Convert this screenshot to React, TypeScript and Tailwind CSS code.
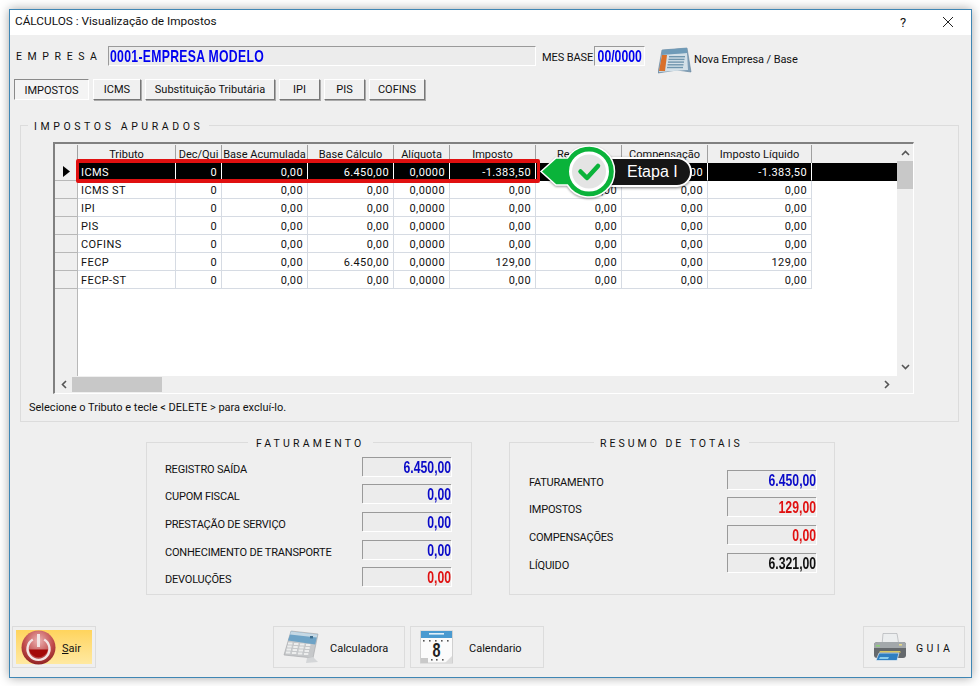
import React from 'react';

const COLS = ['w-[98px]', 'w-[46px]', 'w-[86px]', 'w-[86px]', 'w-[56px]', 'w-[86px]', 'w-[86px]', 'w-[86px]', 'w-[104px]'];
const HEADERS = ['Tributo', 'Dec/Qui', 'Base Acumulada', 'Base Cálculo', 'Alíquota', 'Imposto', 'Redução', 'Compensação', 'Imposto Líquido'];
const ROWS = [
  ['ICMS', '0', '0,00', '6.450,00', '0,0000', '-1.383,50', '0,00', '0,00', '-1.383,50'],
  ['ICMS ST', '0', '0,00', '0,00', '0,0000', '0,00', '0,00', '0,00', '0,00'],
  ['IPI', '0', '0,00', '0,00', '0,0000', '0,00', '0,00', '0,00', '0,00'],
  ['PIS', '0', '0,00', '0,00', '0,0000', '0,00', '0,00', '0,00', '0,00'],
  ['COFINS', '0', '0,00', '0,00', '0,0000', '0,00', '0,00', '0,00', '0,00'],
  ['FECP', '0', '0,00', '6.450,00', '0,0000', '129,00', '0,00', '0,00', '129,00'],
  ['FECP-ST', '0', '0,00', '0,00', '0,0000', '0,00', '0,00', '0,00', '0,00'],
];

const Tab: React.FC<{ label: string; width: string; active?: boolean }> = ({ label, width, active }) => (
  <div
    className={`${width} h-[21px] flex items-center justify-center border ${
      active
        ? 'border-t-[#8a8a8a] border-l-[#8a8a8a] border-r-white border-b-white bg-[#f4f4f4] pt-[2px]'
        : 'border-t-white border-l-white border-r-[#777] border-b-[#777] bg-[#f0f0f0] shadow-[1px_1px_0_#aaa] pb-[1px]'
    }`}
  >
    {label}
  </div>
);

// values in the boxes are a narrow bold face, Liberation Sans squeezed to fit
const Narrow: React.FC<{ children: React.ReactNode; className: string }> = ({ children, className }) => (
  <span className={`inline-block whitespace-nowrap font-[Liberation_Sans,Arial,sans-serif] font-bold text-[17px] scale-x-[0.72] ${className}`}>
    {children}
  </span>
);

const ValueBox: React.FC<{ value: string; color: string }> = ({ value, color }) => (
  <div className={`ml-auto w-[89px] h-[19px] bg-[#ececec] border-t border-l border-[#9a9a9a] shadow-[1px_1px_0_#fff] flex items-center justify-end ${color}`}>
    <Narrow className="origin-right">{value}</Narrow>
  </div>
);

const TotalRow: React.FC<{ label: string; value: string; color: string; h: string }> = ({ label, value, color, h }) => (
  <div className={`${h} flex items-start`}>
    <span className="mt-[7px] tracking-[-0.2px]">{label}</span>
    <ValueBox value={value} color={color} />
  </div>
);

const PowerIcon = () => (
  <svg width="35" height="35" viewBox="0 0 35 35">
    <defs>
      <radialGradient id="pw" cx="0.5" cy="0.3" r="0.8">
        <stop offset="0" stopColor="#ecb4b4" />
        <stop offset="0.55" stopColor="#c04a4a" />
        <stop offset="1" stopColor="#7d1212" />
      </radialGradient>
    </defs>
    <circle cx="17.5" cy="17.5" r="17" fill="url(#pw)" />
    <path d="M8 19.5a9.7 9.7 0 0 0 19 0z" fill="#a30808" />
    <path d="M11.8 9.5a11 11 0 1 0 11.4 0" fill="none" stroke="#f2e4e4" strokeWidth="2.4" />
    <rect x="16" y="4" width="3" height="13" fill="#f3e4e4" />
  </svg>
);

const CalcIcon = () => (
  <svg width="36" height="34" viewBox="0 0 36 34">
    <path d="M8 1l27 3-5 24-29-3z" fill="#c6c8ca" stroke="#a3a5a8" strokeWidth="0.6" />
    <path d="M8 1.5l26.5 3-2.3 10L5 10.5z" fill="#6ea3c6" />
    <path d="M8 1.5l26.5 3-.7 3L7 4.5z" fill="#c5d8e4" />
    <rect x="27" y="6" width="3" height="2.4" fill="#3f6f90" />
    <g fill="#eceded">
      {[0, 1, 2, 3].map(r =>
        [0, 1, 2, 3].map(c => <rect key={`${r}-${c}`} x={5 + c * 6 - r * 0.7} y={12.5 + r * 3 + c * 0.5} width="4.4" height="2" />)
      )}
    </g>
    <path d="M24 28l6-1 5 5-12 1z" fill="#d4d6d8" />
  </svg>
);

const CalendarIcon = () => (
  <svg width="33" height="34" viewBox="0 0 33 34">
    <rect x="0.5" y="1" width="32" height="32" fill="#fbfbfb" stroke="#d0d0d0" />
    <rect x="1" y="1" width="31" height="7" fill="#4a9ad0" />
    <rect x="9" y="3" width="15" height="1.6" fill="#e2f0f9" />
    <g fill="#555">
      <rect x="3" y="10" width="1.6" height="1.6" /><rect x="9" y="10" width="1.6" height="1.6" /><rect x="15" y="10" width="1.6" height="1.6" /><rect x="21" y="10" width="1.6" height="1.6" /><rect x="27" y="10" width="1.6" height="1.6" />
      <rect x="11" y="29" width="1.6" height="1.6" /><rect x="16" y="29" width="1.6" height="1.6" /><rect x="22" y="29" width="1.6" height="1.6" />
    </g>
    <text transform="translate(16.5 27) scale(0.72 1)" textAnchor="middle" fontFamily="'Liberation Sans',sans-serif" fontWeight="700" fontSize="20" fill="#222">8</text>
    <path d="M1 33v-5h7v5z" fill="#c9c9c9" />
    <path d="M32 26v7h-7z" fill="#dcdcdc" />
  </svg>
);

const PrinterIcon = () => (
  <svg width="34" height="28" viewBox="0 0 34 28">
    <path d="M10 0.5h14l2 12H9z" fill="#eceeef" stroke="#a6aaad" strokeWidth="0.6" />
    <path d="M1 12q0-3 4-3h25q3 0 3 3v10q0 3-3 3H4q-3 0-3-3z" fill="#65696d" />
    <path d="M1 12q0-3 4-3h25q3 0 3 3v3H1z" fill="#a3a8ab" />
    <rect x="3" y="12" width="4" height="1.6" fill="#8fd07a" />
    <rect x="26" y="11" width="3" height="1.6" fill="#e5d98a" />
    <path d="M7 18h20l1 1.5H6z" fill="#d8c860" />
    <path d="M6 20h20l-2 7.5H3z" fill="#2f7fc1" stroke="#e8eef2" strokeWidth="0.7" />
    <path d="M7 24h9l-1 2H6z" fill="#8ccdea" />
  </svg>
);

const DeskCalendarIcon = () => (
  <svg width="34" height="27" viewBox="0 0 34 27">
    <path d="M4 3L29 1l4 24-14-2-19 3z" fill="#7f9fb8" stroke="#5f7f98" strokeWidth="0.6" />
    <path d="M4 7l25-1 1 17L1 25z" fill="#d3e0e8" />
    <path d="M4 3l25-2 0 5L4 8z" fill="#6f9bb8" />
    <path d="M4 8h5L7 24H1z" fill="#d9702a" />
    <g fill="#6f95ad">
      {[0, 1, 2, 3, 4].map(r => <rect key={r} x={11 - r * 0.5} y={9 + r * 2.7} width="16" height="1.4" />)}
    </g>
  </svg>
);

export default function App() {
  return (
    <div className="w-[980px] h-[686px] bg-white pl-[9px] pt-[9px] font-[Roboto,Arial,sans-serif] text-[11px] leading-none text-[#111] overflow-hidden">
      <div className="w-[963px] h-[669px] border border-[#3f86b4] bg-[#efefef] shadow-[0_0_10px_rgba(0,0,0,0.35)] flex flex-col">
        {/* Title bar */}
        <div className="h-[25px] shrink-0 bg-white flex items-center pl-[5px] pb-[1px] text-[11.8px]">
          <span className="flex-1">CÁLCULOS : Visualização de Impostos</span>
          <span className="w-[10px] text-[13px] mr-[32px]">?</span>
          <svg width="12" height="12" viewBox="0 0 12 12" className="mr-[17px]">
            <path d="M1 1l10 10M11 1L1 11" stroke="#222" strokeWidth="1" />
          </svg>
        </div>

        {/* Empresa row */}
        <div className="mt-[11px] h-[29px] flex items-start pl-[6px]">
          <span className="w-[92px] mt-[6px] tracking-[5.6px] text-[10.5px]">EMPRESA</span>
          <div className="w-[428px] h-[20px] border border-t-[#9a9a9a] border-l-[#9a9a9a] border-r-white border-b-white flex items-center pl-[1px] text-[#0000f0] bg-[#ececec]">
            <Narrow className="origin-left tracking-[0.4px]">0001-EMPRESA MODELO</Narrow>
          </div>
          <span className="ml-[6px] mt-[6px] w-[52px] tracking-[-0.1px] whitespace-nowrap">MES BASE</span>
          <div className="w-[51px] h-[20px] border border-t-[#9a9a9a] border-l-[#9a9a9a] border-r-white border-b-white flex items-center justify-center text-[#0000f0] bg-[#f2f2f2]">
            <Narrow className="origin-center">00/0000</Narrow>
          </div>
          <div className="ml-[13px] mt-[1px]"><DeskCalendarIcon /></div>
          <span className="ml-[2px] mt-[8px] tracking-[-0.1px]">Nova Empresa / Base</span>
        </div>

        {/* Tabs */}
        <div className="mt-[4px] h-[21px] flex gap-[4px] pl-[4px]">
          <Tab label="IMPOSTOS" width="w-[75px]" active />
          <Tab label="ICMS" width="w-[48px]" />
          <Tab label="Substituição Tributária" width="w-[130px]" />
          <Tab label="IPI" width="w-[41px]" />
          <Tab label="PIS" width="w-[41px]" />
          <Tab label="COFINS" width="w-[56px]" />
        </div>

        {/* Impostos apurados */}
        <div className="relative mt-[25px] ml-[10px] w-[939px] h-[297px] shrink-0 border border-[#dcdcdc] pl-[32px] pt-[16px]">
          <span className="absolute left-[7px] top-[-4px] bg-[#efefef] px-[6px] tracking-[3.6px] text-[10.5px] whitespace-nowrap">IMPOSTOS APURADOS</span>

          <div className="relative w-[861px] h-[252px] border-t-2 border-l-2 border-t-[#808080] border-l-[#808080] border-r border-b border-r-white border-b-white bg-[#efefef] flex flex-col">
            <div className="flex-1 flex min-h-0">
              <div className="w-[843px] flex flex-col bg-white tracking-[0.4px]">
                {/* Header */}
                <div className="h-[19px] pt-[1px] flex bg-[#efefef] shrink-0 tracking-normal">
                  <div className="w-[23px] border-r border-[#a0a0a0]" />
                  {HEADERS.map((h, i) => (
                    <div key={h} className={`${COLS[i]} border-r border-[#a0a0a0] flex items-center justify-center whitespace-nowrap`}>
                      {h}
                    </div>
                  ))}
                </div>
                {/* Rows */}
                {ROWS.map((row, r) => (
                  <div key={row[0]} className={`h-[18px] flex shrink-0 ${r === 0 ? 'bg-black text-white' : 'text-[#111]'}`}>
                    <div className="w-[23px] bg-[#efefef] border-r border-b border-[#b8b8b8] flex items-center justify-center">
                      {r === 0 && (
                        <svg width="7" height="11" viewBox="0 0 7 11"><path d="M0 0l7 5.5L0 11z" fill="#000" /></svg>
                      )}
                    </div>
                    {row.map((cell, i) => (
                      <div
                        key={i}
                        className={`${COLS[i]} pt-[1px] border-r border-b border-[#d6dbe3] flex items-center whitespace-nowrap ${i === 0 ? 'pl-[3px]' : 'justify-end pr-[4px]'} ${r === 0 ? 'border-b-black border-r-white' : ''}`}
                      >
                        {cell}
                      </div>
                    ))}
                    {r === 0 && <div className="flex-1" />}
                  </div>
                ))}
                <div className="flex-1 flex">
                  <div className="w-[23px] bg-[#efefef] border-r border-[#b8b8b8]" />
                </div>
              </div>
              {/* Vertical scrollbar */}
              <div className="w-[16px] flex flex-col items-center">
                <svg width="9" height="6" viewBox="0 0 9 6" className="mt-[6px]"><path d="M1 5l3.5-3.5L8 5" fill="none" stroke="#555" strokeWidth="1.6" /></svg>
                <div className="mt-[5px] w-full h-[28px] bg-[#c8c8c8]" />
                <svg width="9" height="6" viewBox="0 0 9 6" className="mt-auto mb-[6px]"><path d="M1 1l3.5 3.5L8 1" fill="none" stroke="#555" strokeWidth="1.6" /></svg>
              </div>
            </div>
            {/* Horizontal scrollbar */}
            <div className="h-[17px] shrink-0 flex items-center">
              <svg width="6" height="9" viewBox="0 0 6 9" className="ml-[6px]"><path d="M5 1L1.5 4.5 5 8" fill="none" stroke="#555" strokeWidth="1.6" /></svg>
              <div className="ml-[5px] w-[90px] h-[15px] bg-[#c8c8c8]" />
              <svg width="6" height="9" viewBox="0 0 6 9" className="ml-auto mr-[23px]"><path d="M1 1l3.5 3.5L1 8" fill="none" stroke="#555" strokeWidth="1.6" /></svg>
            </div>

            {/* Highlight over the first row */}
            <div className="absolute left-[21px] top-[15px] w-[464px] h-[24px] border-x-[3px] border-y-4 border-[#e01010] rounded-[2px]" />

            {/* Etapa callout */}
            <div className="absolute left-[484px] top-0 w-[155px] h-[56px]">
              <div className="absolute left-[51px] top-[13px] w-[102px] h-[30px] rounded-full bg-[#161616] border-2 border-white text-white font-[Liberation_Sans,Arial,sans-serif] text-[16px] flex items-center pl-[35px] shadow-[0_1px_3px_rgba(0,0,0,0.5)]">
                Etapa I
              </div>
              <svg width="80" height="56" viewBox="0 0 80 56" className="absolute left-0 top-0 drop-shadow-[0_1px_1px_rgba(0,0,0,0.4)]">
                <path d="M2 27.5L17 14H28.4A25.5 25.5 0 1 1 28.4 41H17Z" fill="#0ab33a" stroke="#fff" strokeWidth="1.5" />
                <circle cx="50" cy="27.5" r="18.5" fill="#e4e4e4" stroke="#fff" strokeWidth="3" />
                <path d="M41.5 27.5l6.5 6.5 11-12" fill="none" stroke="#0ab33a" strokeWidth="4.5" strokeLinecap="round" strokeLinejoin="round" />
              </svg>
            </div>
          </div>

          <div className="mt-[8px] -ml-[24px]">Selecione o Tributo e tecle &lt; DELETE &gt; para excluí-lo.</div>
        </div>

        {/* Summary boxes */}
        <div className="mt-[20px] ml-[136px] flex gap-[37px] shrink-0">
          <div className="relative w-[326px] h-[153px] border border-[#dcdcdc] pl-[18px] pr-[20px] pt-[14px]">
            <span className="absolute left-[101px] top-[-4px] bg-[#efefef] px-[8px] tracking-[3.2px] text-[10.5px] whitespace-nowrap">FATURAMENTO</span>
            <TotalRow label="REGISTRO SAÍDA" value="6.450,00" color="text-[#0a0ac8]" h="h-[27px]" />
            <TotalRow label="CUPOM FISCAL" value="0,00" color="text-[#0a0ac8]" h="h-[28px]" />
            <TotalRow label="PRESTAÇÃO DE SERVIÇO" value="0,00" color="text-[#0a0ac8]" h="h-[28px]" />
            <TotalRow label="CONHECIMENTO DE TRANSPORTE" value="0,00" color="text-[#0a0ac8]" h="h-[27px]" />
            <TotalRow label="DEVOLUÇÕES" value="0,00" color="text-[#e01010]" h="h-[27px]" />
          </div>
          <div className="relative w-[326px] h-[153px] border border-[#dcdcdc] pl-[19px] pr-[18px] pt-[27px]">
            <span className="absolute left-[84px] top-[-4px] bg-[#efefef] px-[6px] tracking-[3px] text-[10.5px] whitespace-nowrap">RESUMO DE TOTAIS</span>
            <TotalRow label="FATURAMENTO" value="6.450,00" color="text-[#0a0ac8]" h="h-[27px]" />
            <TotalRow label="IMPOSTOS" value="129,00" color="text-[#e01010]" h="h-[28px]" />
            <TotalRow label="COMPENSAÇÕES" value="0,00" color="text-[#e01010]" h="h-[28px]" />
            <TotalRow label="LÍQUIDO" value="6.321,00" color="text-[#111]" h="h-[27px]" />
          </div>
        </div>

        {/* Bottom buttons */}
        <div className="mt-[31px] flex pl-[2px]">
          <div className="w-[84px] h-[42px] border border-[#dcdcdc] p-[3px]">
            <div className="relative h-full bg-gradient-to-b from-[#ffd45c] to-[#ffe9a0] flex items-center pl-[5px]">
              <PowerIcon />
              <span className="ml-[6px] mt-[2px]"><u>S</u>air</span>
            </div>
          </div>
          <div className="ml-[177px] w-[132px] h-[42px] border border-[#dcdcdc] flex items-center pl-[9px]">
            <CalcIcon />
            <span className="ml-[11px] mt-[2px]">Calculadora</span>
          </div>
          <div className="ml-[5px] w-[134px] h-[42px] border border-[#dcdcdc] flex items-center pl-[9px]">
            <CalendarIcon />
            <span className="ml-[16px] mt-[2px]">Calendario</span>
          </div>
          <div className="ml-[319px] w-[102px] h-[42px] border border-[#dcdcdc] flex items-center pl-[9px]">
            <PrinterIcon />
            <span className="ml-[9px] mt-[5px] tracking-[3.4px] text-[10.5px]">GUIA</span>
          </div>
        </div>
      </div>
    </div>
  );
}
